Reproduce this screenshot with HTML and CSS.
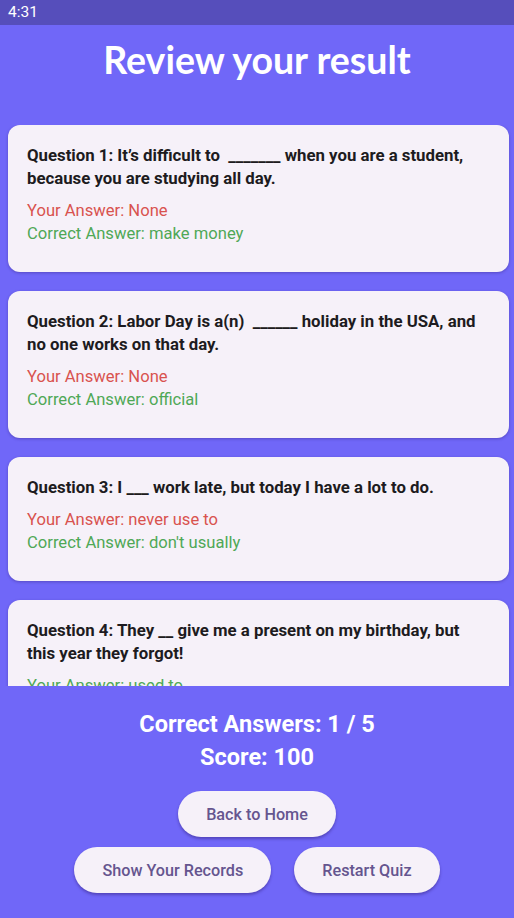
FILE: index.html
```html
<!DOCTYPE html>
<html>
<head>
<meta charset="utf-8">
<link rel="stylesheet" href="styles.css">
</head>
<body>
<div class="status">4:31</div>
<div class="screen">
  <h1 class="title">Review your result</h1>
  <div class="list">
    <div class="card">
      <p class="q">Question 1: It’s difficult to &nbsp;_______ when you are a student, because you are studying all day.</p>
      <p class="ans wrong">Your Answer: None</p>
      <p class="ans right">Correct Answer: make money</p>
    </div>
    <div class="card">
      <p class="q">Question 2: Labor Day is a(n) &nbsp;______ holiday in the USA, and no one works on that day.</p>
      <p class="ans wrong">Your Answer: None</p>
      <p class="ans right">Correct Answer: official</p>
    </div>
    <div class="card">
      <p class="q">Question 3: I ___ work late, but today I have a lot to do.</p>
      <p class="ans wrong">Your Answer: never use to</p>
      <p class="ans right">Correct Answer: don't usually</p>
    </div>
    <div class="card">
      <p class="q">Question 4: They __ give me a present on my birthday, but this year they forgot!</p>
      <p class="ans right">Your Answer: used to</p>
    </div>
  </div>
  <div class="summary">
    <p class="stat">Correct Answers: 1 / 5</p>
    <p class="stat">Score: 100</p>
    <div class="buttons">
      <button class="btn">Back to Home</button>
      <div class="row">
        <button class="btn">Show Your Records</button>
        <button class="btn">Restart Quiz</button>
      </div>
    </div>
  </div>
</div>
</body>
</html>
```

FILE: styles.css
```css
* { box-sizing: border-box; }
html, body { margin: 0; padding: 0; }
body {
  width: 514px;
  height: 918px;
  overflow: hidden;
  background: #7067f8;
  font-family: Roboto, "Noto Sans", sans-serif;
}
.status {
  height: 25px;
  background: #564ebb;
  color: #fff;
  font-size: 15.5px;
  line-height: 25px;
  padding-left: 8px;
}
.screen {
  height: 893px;
  display: flex;
  flex-direction: column;
}
.title {
  flex: none;
  margin: 0;
  padding-top: 12px;
  height: 100px;
  text-align: center;
  font-family: Lato, sans-serif;
  font-weight: 700;
  font-size: 37.5px;
  line-height: 45px;
  color: #fff;
}
.list {
  flex: 1;
  min-height: 0;
  overflow: hidden;
  padding: 0 5px 0 8px;
  display: flex;
  flex-direction: column;
  gap: 19px;
}
.card {
  flex: none;
  background: #f6f1f9;
  border-radius: 12px;
  padding: 19px 19px 27px 19px;
  box-shadow: 0 1px 3px rgba(40, 20, 100, 0.35);
}
.q {
  margin: 0 0 9px 0;
  font-weight: 700;
  font-size: 16.8px;
  line-height: 23px;
  color: #1d1b20;
}
.ans {
  margin: 0;
  font-size: 16.6px;
  line-height: 23px;
}
.wrong { color: #d9534f; }
.right { color: #4fa856; }
.summary {
  flex: none;
  display: flex;
  flex-direction: column;
  align-items: center;
  padding: 22px 0 25px 0;
}
.stat {
  margin: 0;
  color: #fff;
  font-weight: 700;
  font-size: 23.5px;
  line-height: 33px;
}
.buttons {
  margin-top: 17px;
  display: flex;
  flex-direction: column;
  align-items: center;
  gap: 10px;
}
.row {
  display: flex;
  gap: 23px;
}
.btn {
  height: 46px;
  border: none;
  border-radius: 23px;
  padding: 0 28px;
  background: #f6f1f9;
  color: #65558f;
  font-family: Roboto, sans-serif;
  font-weight: 500;
  font-size: 16.2px;
  box-shadow: 0 2px 3px rgba(40, 20, 100, 0.4);
}
```
